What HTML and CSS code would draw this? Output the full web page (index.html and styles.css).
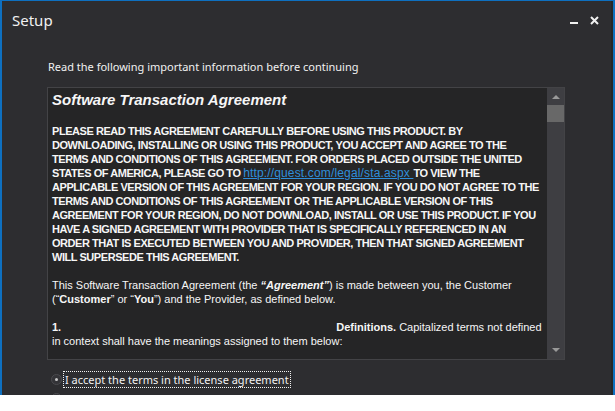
FILE: index.html
```html
<!DOCTYPE html>
<html>
<head>
<title>Setup</title>
<link rel="stylesheet" href="styles.css">
</head>
<body>
<div class="window">
<div class="titlebar">
<span class="title">Setup</span>
<div class="controls">
<span class="min"></span>
<svg class="close" width="9" height="9" viewBox="0 0 9 9"><path d="M1 1L8 8M8 1L1 8" stroke="#f0f0f0" stroke-width="2"/></svg>
</div>
</div>
<div class="content">
<p class="intro">Read the following important information before continuing</p>
<div class="license">
<div class="license-text">
<h1>Software Transaction Agreement</h1>
<p class="caps">PLEASE READ THIS AGREEMENT CAREFULLY BEFORE USING THIS PRODUCT. BY<br>
DOWNLOADING, INSTALLING OR USING THIS PRODUCT, YOU ACCEPT AND AGREE TO THE<br>
TERMS AND CONDITIONS OF THIS AGREEMENT. FOR ORDERS PLACED OUTSIDE THE UNITED<br>
STATES OF AMERICA, PLEASE GO TO <a href="#">http://quest.com/legal/sta.aspx </a>TO VIEW THE<br>
APPLICABLE VERSION OF THIS AGREEMENT FOR YOUR REGION. IF YOU DO NOT AGREE TO THE<br>
TERMS AND CONDITIONS OF THIS AGREEMENT OR THE APPLICABLE VERSION OF THIS<br>
AGREEMENT FOR YOUR REGION, DO NOT DOWNLOAD, INSTALL OR USE THIS PRODUCT. IF YOU<br>
HAVE A SIGNED AGREEMENT WITH PROVIDER THAT IS SPECIFICALLY REFERENCED IN AN<br>
ORDER THAT IS EXECUTED BETWEEN YOU AND PROVIDER, THEN THAT SIGNED AGREEMENT<br>
WILL SUPERSEDE THIS AGREEMENT.</p>
<p>This Software Transaction Agreement (the <b><i>“Agreement”</i></b>) is made between you, the Customer<br>
(“<b>Customer</b>” or “<b>You</b>”) and the Provider, as defined below.</p>
<p><b>1.</b><span class="tab"></span><b>Definitions.</b> Capitalized terms not defined<br>
in context shall have the meanings assigned to them below:</p>
</div>
<div class="scrollbar">
<div class="arrow up"></div>
<div class="thumb"></div>
<div class="track"></div>
<div class="arrow down"></div>
</div>
</div>
<label class="option focused"><span class="radio checked"></span><span class="label">I accept the terms in the license agreement</span></label>
<label class="option"><span class="radio"></span><span class="label">I do not accept the terms in the license agreement</span></label>
</div>
</div>
</body>
</html>
```
FILE: styles.css
```css
body{
margin:0;
background:#fff;
}
.window{
height:394px;
overflow:hidden;
background:#2d2d30;
border-top:1px solid #0e70c0;
border-left:2px solid #0e70c0;
border-right:2px solid #0e70c0;
box-shadow:inset -2px 0 #262628;
font-family:"Noto Sans",sans-serif;
color:#f1f1f1;
}
.titlebar{
display:flex;
justify-content:space-between;
align-items:center;
height:38px;
padding:0 14px 0 10px;
}
.title{
font-size:15px;
}
.controls{
display:flex;
align-items:center;
gap:12px;
}
.min{
display:block;
width:8px;
height:2px;
margin-top:6px;
background:#f0f0f0;
}
.content{
padding:20px 48px 0 45px;
}
.intro{
margin:0 0 13px 1px;
font-size:11px;
}
.license{
display:flex;
height:271px;
border:1px solid #434346;
background:#252526;
}
.license-text{
flex:1;
overflow:hidden;
padding:3px 2px 0 4px;
font-family:"Liberation Sans",Arial,sans-serif;
font-size:11px;
line-height:14px;
color:#f6f6f6;
white-space:nowrap;
}
.license-text h1{
margin:0 0 15px;
font-size:15px;
font-style:italic;
line-height:18px;
}
.license-text p{
margin:0 0 14px;
}
.caps{
font-weight:bold;
letter-spacing:-0.45px;
}
.license-text a{
font-weight:normal;
font-size:12px;
letter-spacing:0.15px;
color:#2f8fdb;
}
.tab{
display:inline-block;
width:275px;
}
.scrollbar{
display:flex;
flex-direction:column;
width:17px;
background:#3e3e42;
}
.arrow{
height:17px;
position:relative;
}
.arrow::after{
content:"";
position:absolute;
left:5px;
top:7px;
border-left:4px solid transparent;
border-right:4px solid transparent;
}
.up::after{
border-bottom:4px solid #999;
}
.down::after{
top:6px;
border-top:4px solid #999;
}
.thumb{
height:17px;
background:#686868;
}
.track{
flex:1;
}
.option{
display:flex;
align-items:center;
gap:1px;
margin:11px 0 0 4px;
font-size:11px;
}
.radio{
width:11px;
height:11px;
box-sizing:border-box;
border:1px solid #4a4a4e;
border-radius:50%;
background:#333337;
position:relative;
}
.radio.checked::after{
content:"";
position:absolute;
left:3px;
top:3px;
width:3px;
height:3px;
border-radius:50%;
background:#c8c8c8;
}
.label{
padding:0 1px;
border:1px dotted transparent;
}
.focused .label{
border-color:#f0f0f0;
}
.option + .option{
margin-top:2px;
}
```
